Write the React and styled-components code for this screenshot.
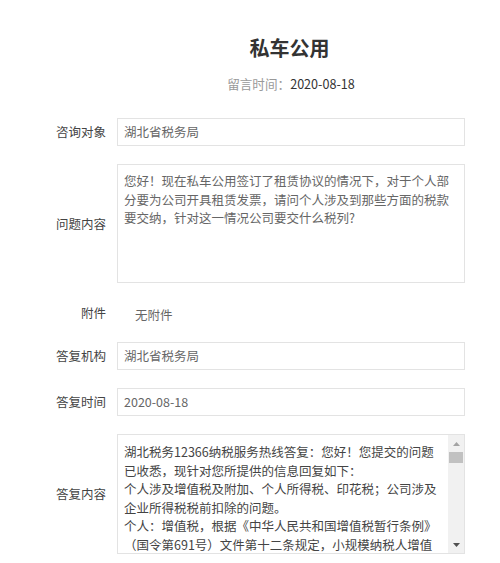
import styled, { createGlobalStyle } from "styled-components";

const GlobalStyle = createGlobalStyle`
  html, body {
    margin: 0;
    padding: 0;
    background: #ffffff;
  }
  body {
    font-family: "Noto Sans CJK SC", "Noto Sans", sans-serif;
    color: #333333;
  }
`;

const answer =
  "湖北税务12366纳税服务热线答复：您好！您提交的问题已收悉，现针对您所提供的信息回复如下：\n" +
  "个人涉及增值税及附加、个人所得税、印花税；公司涉及企业所得税税前扣除的问题。\n" +
  "个人：增值税，根据《中华人民共和国增值税暂行条例》（国令第691号）文件第十二条规定，小规模纳税人增值税征收率为3%，国务院另有规定的除外。";

export default function App() {
  return (
    <Page>
      <GlobalStyle />
      <Header>
        <Title>私车公用</Title>
        <Meta>
          <span>留言时间：</span>
          <b>2020-08-18</b>
        </Meta>
      </Header>
      <Form>
        <Label>咨询对象</Label>
        <Field>湖北省税务局</Field>

        <Label>问题内容</Label>
        <Area>
          您好！现在私车公用签订了租赁协议的情况下，对于个人部分要为公司开具租赁发票，请问个人涉及到那些方面的税款要交纳，针对这一情况公司要交什么税列?
        </Area>

        <Label>附件</Label>
        <Attach>无附件</Attach>

        <Label>答复机构</Label>
        <Field>湖北省税务局</Field>

        <Label>答复时间</Label>
        <Field>2020-08-18</Field>

        <Label>答复内容</Label>
        <ScrollBox>
          <ScrollText>{answer}</ScrollText>
          <Scrollbar>
            <ArrowButton>
              <svg width="7" height="4" viewBox="0 0 7 4">
                <path d="M0 4 L3.5 0 L7 4 Z" fill="#a3a3a3" />
              </svg>
            </ArrowButton>
            <Track>
              <Thumb />
            </Track>
            <ArrowButton>
              <svg width="7" height="4" viewBox="0 0 7 4">
                <path d="M0 0 L3.5 4 L7 0 Z" fill="#505050" />
              </svg>
            </ArrowButton>
          </Scrollbar>
        </ScrollBox>
      </Form>
    </Page>
  );
}

const Page = styled.div`
  width: 500px;
  height: 563px;
  overflow: hidden;
  box-sizing: border-box;
  padding-top: 33px;
`;

const Header = styled.div`
  margin-left: 117px;
  width: 348px;
  text-align: center;
`;

const Title = styled.h1`
  margin: 0;
  font-size: 20px;
  line-height: 30px;
  font-weight: 700;
  color: #333333;
  padding-right: 3px;
`;

const Meta = styled.div`
  margin-top: 12px;
  font-size: 12.6px;
  line-height: 18px;
  span {
    color: #999999;
  }
  b {
    font-weight: 400;
    color: #333333;
  }
`;

const Form = styled.div`
  margin-top: 25px;
  display: grid;
  grid-template-columns: 106px 348px;
  column-gap: 11px;
  row-gap: 18px;
  align-items: center;
`;

const Label = styled.div`
  text-align: right;
  font-size: 12.5px;
  line-height: 18px;
  color: #444444;
`;

const Field = styled.div`
  box-sizing: border-box;
  height: 28px;
  border: 1px solid #e3e3e3;
  padding: 0 6px;
  font-size: 12.5px;
  line-height: 26px;
  color: #666666;
`;

const Area = styled.div`
  box-sizing: border-box;
  height: 119px;
  border: 1px solid #e3e3e3;
  padding: 7px 7px 7px 6px;
  font-size: 12.5px;
  line-height: 18.5px;
  color: #666666;
`;

const Attach = styled.div`
  height: 23px;
  padding-left: 18px;
  padding-top: 5px;
  box-sizing: border-box;
  font-size: 12.5px;
  line-height: 18px;
  color: #666666;
`;

const ScrollBox = styled.div`
  box-sizing: border-box;
  height: 120px;
  border: 1px solid #e3e3e3;
  display: flex;
`;

const ScrollText = styled.div`
  flex: 1;
  overflow: hidden;
  padding: 8px 4px 0 6px;
  font-size: 12.5px;
  line-height: 18.5px;
  color: #444444;
  white-space: pre-wrap;
`;

const Scrollbar = styled.div`
  width: 16px;
  display: flex;
  flex-direction: column;
  background: #f1f1f1;
`;

const ArrowButton = styled.div`
  height: 17px;
  display: flex;
  align-items: center;
  justify-content: center;
`;

const Track = styled.div`
  flex: 1;
  padding: 0 1px;
`;

const Thumb = styled.div`
  height: 11px;
  background: #c1c1c1;
`;
